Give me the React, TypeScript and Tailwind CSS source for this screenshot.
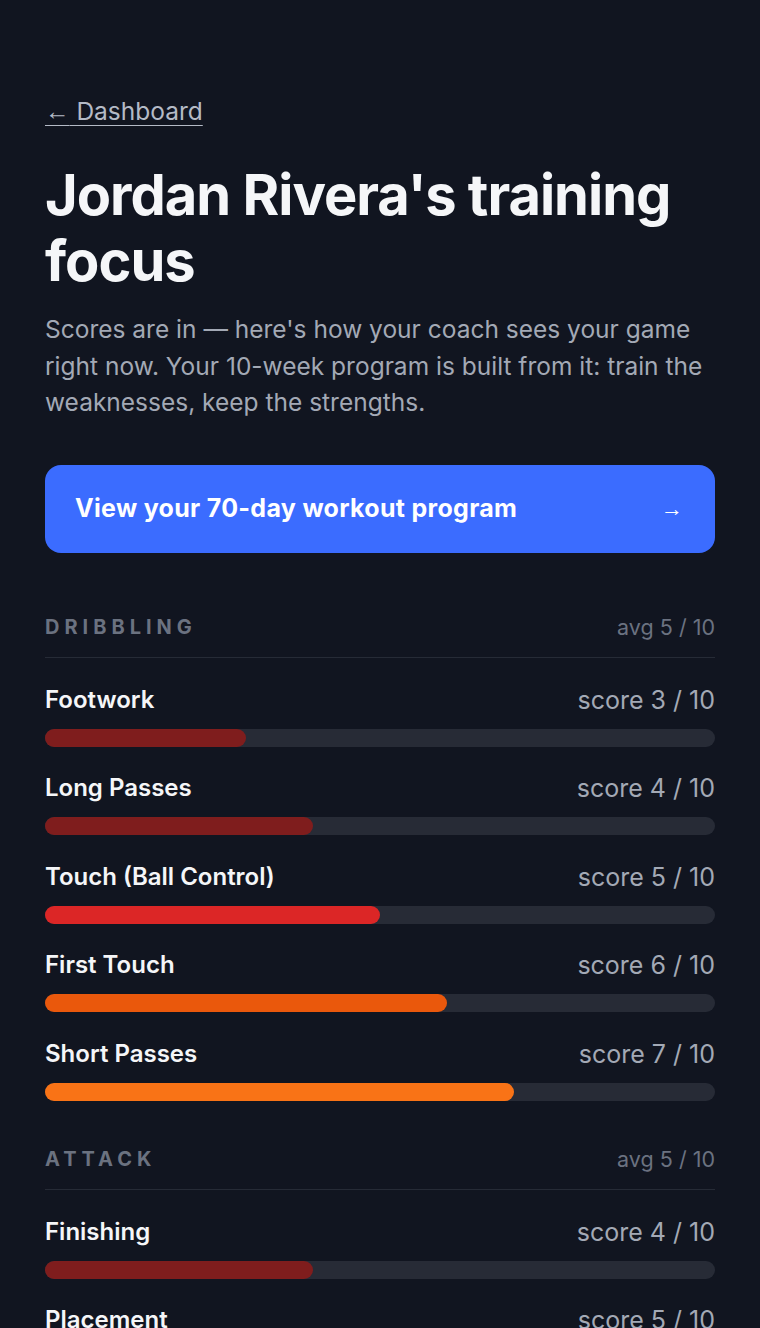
import React from "react";

type Skill = { name: string; score: number };
type Section = { title: string; avg: number; skills: Skill[] };

const sections: Section[] = [
  {
    title: "Dribbling",
    avg: 5,
    skills: [
      { name: "Footwork", score: 3 },
      { name: "Long Passes", score: 4 },
      { name: "Touch (Ball Control)", score: 5 },
      { name: "First Touch", score: 6 },
      { name: "Short Passes", score: 7 },
    ],
  },
  {
    title: "Attack",
    avg: 5,
    skills: [
      { name: "Finishing", score: 4 },
      { name: "Placement", score: 5 },
      { name: "Heading", score: 6 },
    ],
  },
];

function barColor(score: number) {
  if (score <= 4) return "bg-[#7f1d1d]";
  if (score === 5) return "bg-[#dc2626]";
  if (score === 6) return "bg-[#ea580c]";
  return "bg-[#f97316]";
}

export default function App() {
  return (
    <div
      className="min-h-screen bg-[#111520] px-[45px] pt-[93px] pb-20 text-white"
      style={{ fontFamily: "Inter, 'Liberation Sans', sans-serif" }}
    >
      <a href="#" className="text-[24.5px] leading-[36px] text-[#b4bac6] underline underline-offset-[5px] decoration-1">
        <span style={{ fontFamily: "'Liberation Sans', sans-serif" }}>←</span> Dashboard
      </a>
      <h1 className="mt-[32px] text-[56px] font-bold leading-[66px] tracking-[-1px] text-[#f5f6f8]">
        Jordan Rivera's training focus
      </h1>
      <p className="mt-[17px] text-[24.5px] leading-[36.5px] text-[#a3a9b5]">
        Scores are in — here's how your coach sees your game right now. Your 10-week program is built from it: train
        the weaknesses, keep the strengths.
      </p>
      <button className="mt-[44px] flex h-[88px] w-full items-center justify-between rounded-[16px] bg-[#3b6cff] pl-[30px] pr-[32px] text-left">
        <span className="text-[25px] font-bold tracking-[0.3px] text-white">View your 70-day workout program</span>
        <span className="text-[22px] text-white" style={{ fontFamily: "'Liberation Sans', sans-serif" }}>
          →
        </span>
      </button>

      {sections.map((s, si) => (
        <section key={s.title} className={si === 0 ? "mt-[59px]" : "mt-[43px]"}>
          <div className="flex items-center justify-between border-b border-[#262b36] pb-[15px]">
            <span className="text-[20px] font-bold uppercase leading-[30px] tracking-[0.25em] text-[#6b7280]">
              {s.title}
            </span>
            <span className="text-[21.5px] leading-[30px] text-[#6b7280]">avg {s.avg} / 10</span>
          </div>
          <div className="flex flex-col gap-[26.5px] pt-[27px]">
            {s.skills.map((k) => (
              <div key={k.name}>
                <div className="flex items-center justify-between">
                  <span className="text-[24px] font-semibold leading-[30px] text-[#f5f6f8]">{k.name}</span>
                  <span className="text-[25px] leading-[30px] text-[#a3a9b5]">score {k.score} / 10</span>
                </div>
                <div className="mt-[14px] h-[18px] w-full rounded-full bg-[#272b36]">
                  <div
                    className={`h-full rounded-full ${barColor(k.score)}`}
                    style={{ width: `${k.score * 10}%` }}
                  />
                </div>
              </div>
            ))}
          </div>
        </section>
      ))}
    </div>
  );
}
